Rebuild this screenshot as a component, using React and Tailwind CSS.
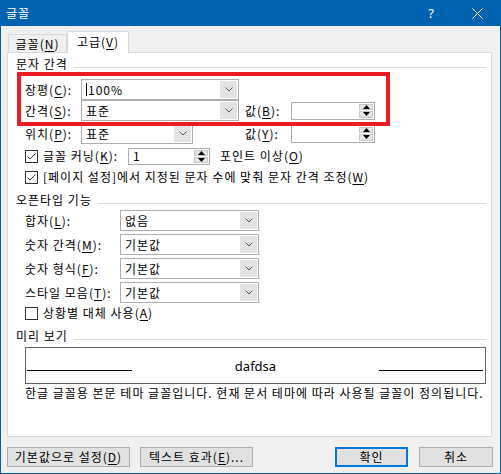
import React from 'react';

// mnemonic letter with underline
function K({ children }) {
  return <span className="underline decoration-1 underline-offset-[2px]">{children}</span>;
}

function Chevron() {
  return (
    <svg width="8" height="5" viewBox="0 0 8 5">
      <path d="M0.5 0.5 L4 4 L7.5 0.5" fill="none" stroke="#5a5a5a" strokeWidth="1" />
    </svg>
  );
}

function Combo({ width, children }) {
  return (
    <div className={`flex h-[21px] border border-[#adadad] bg-white ${width}`}>
      <div className="flex flex-1 items-center pl-[4px]">{children}</div>
      <div className="m-px flex w-[17px] items-center justify-center bg-[#e3e3e3]">
        <Chevron />
      </div>
    </div>
  );
}

function Arrow({ up }) {
  return (
    <svg width="7" height="4" viewBox="0 0 7 4">
      <path d={up ? 'M0 4 L3.5 0 L7 4 Z' : 'M0 0 L3.5 4 L7 0 Z'} fill="#000" />
    </svg>
  );
}

function Spin({ width, height, children }) {
  return (
    <div className={`flex border border-[#adadad] bg-white ${width} ${height}`}>
      <div className="flex flex-1 items-center pl-[4px]">{children}</div>
      <div className="flex w-[16px] flex-col gap-px p-px">
        <div className="flex flex-1 items-center justify-center border border-[#c8c8c8] bg-[#e6e6e6]">
          <Arrow up />
        </div>
        <div className="flex flex-1 items-center justify-center border border-[#c8c8c8] bg-[#e6e6e6]">
          <Arrow />
        </div>
      </div>
    </div>
  );
}

function Check({ checked }) {
  return (
    <div className="flex h-[13px] w-[13px] shrink-0 items-center justify-center border border-[#333] bg-white">
      {checked && (
        <svg width="11" height="11" viewBox="0 0 11 11">
          <path d="M1.5 5.5 L4 8 L9.5 2.5" fill="none" stroke="#333" strokeWidth="1" />
        </svg>
      )}
    </div>
  );
}

function Group({ title, className }) {
  return (
    <div className={`flex h-[16px] items-center ${className}`}>
      <span className="pr-[6px]">{title}</span>
      <div className="mt-[6px] h-px flex-1 bg-[#dcdcdc]" />
    </div>
  );
}

function Btn({ width, primary, children }) {
  return (
    <div
      className={`flex h-[20px] items-center justify-center bg-[#e1e1e1] ${width} ${
        primary ? 'border-2 border-[#0078d7]' : 'border border-[#adadad]'
      }`}
    >
      {children}
    </div>
  );
}

const openTypeRows = [
  { label: <>합자(<K>L</K>):</>, value: '없음' },
  { label: <>숫자 간격(<K>M</K>):</>, value: '기본값' },
  { label: <>숫자 형식(<K>F</K>):</>, value: '기본값' },
  { label: <>스타일 모음(<K>T</K>):</>, value: '기본값' },
];

export default function App() {
  return (
    <div className="relative flex h-[474px] w-[501px] flex-col border-x border-b border-[#0063b1] bg-[#f0f0f0] font-['Noto_Sans_CJK_KR',sans-serif] text-[12px] leading-[16px] tracking-[1px] text-black">
      {/* title bar */}
      <div className="flex h-[26px] shrink-0 items-center bg-[#0063b1] text-white">
        <span className="pl-[5px]">글꼴</span>
        <span className="ml-auto w-[46px] text-center font-['Noto_Sans',sans-serif] text-[13px] tracking-normal">?</span>
        <span className="flex w-[46px] items-center justify-center">
          <svg width="11" height="11" viewBox="0 0 11 11">
            <path d="M0.5 0.5 L10.5 10.5 M10.5 0.5 L0.5 10.5" stroke="#fff" strokeWidth="1" />
          </svg>
        </span>
      </div>

      {/* tabs */}
      <div className="flex h-[26px] shrink-0 items-end pl-[7px]">
        <div className="flex h-[18px] w-[59px] items-center justify-center border border-b-0 border-[#d9d9d9]">
          글꼴(<K>N</K>)
        </div>
        <div className="relative z-10 -mb-px flex h-[22px] w-[62px] items-center justify-center border border-b-0 border-[#d9d9d9] bg-white pb-[2px]">
          고급(<K>V</K>)
        </div>
      </div>

      {/* tab page */}
      <div className="ml-[6px] flex h-[385px] w-[485px] shrink-0 flex-col border border-[#d9d9d9] bg-white pl-[8px] pr-[5px]">
        <Group title="문자 간격" className="mt-[3px]" />

        <div className="flex flex-col pl-[9px]">
          <div className="mt-[7px] flex h-[21px] items-center">
            <span className="w-[56px]">장평(<K>C</K>):</span>
            <Combo width="w-[158px]">
              <span className="mr-px inline-block h-[13px] w-px bg-black" />
              100%
            </Combo>
          </div>
          <div className="flex h-[21px] items-center">
            <span className="w-[56px]">간격(<K>S</K>):</span>
            <Combo width="w-[158px]">표준</Combo>
            <span className="ml-[6px] w-[46px]">값(<K>B</K>):</span>
            <Spin width="w-[84px]" height="h-[18px]" />
          </div>
          <div className="mt-[2px] flex h-[21px] items-center">
            <span className="w-[56px]">위치(<K>P</K>):</span>
            <Combo width="w-[112px]">표준</Combo>
            <span className="ml-[52px] w-[46px]">값(<K>Y</K>):</span>
            <Spin width="w-[84px]" height="h-[18px]" />
          </div>
          <div className="mt-[3px] flex h-[18px] items-center">
            <Check checked />
            <span className="ml-[5px] w-[85px]">글꼴 커닝(<K>K</K>):</span>
            <Spin width="w-[82px]" height="h-[17px]">1</Spin>
            <span className="ml-[10px]">포인트 이상(<K>O</K>)</span>
          </div>
          <div className="mt-[3px] flex h-[18px] items-center">
            <Check checked />
            <span className="ml-[5px]">[페이지 설정]에서 지정된 문자 수에 맞춰 문자 간격 조정(<K>W</K>)</span>
          </div>
        </div>

        <Group title="오픈타입 기능" className="mt-[6px]" />

        <div className="mt-[2px] flex flex-col gap-[3px] pl-[9px]">
          {openTypeRows.map((row, i) => (
            <div key={i} className="flex h-[21px] items-center">
              <span className="w-[95px]">{row.label}</span>
              <Combo width="w-[139px]">{row.value}</Combo>
            </div>
          ))}
        </div>
        <div className="mt-[1px] flex h-[18px] items-center pl-[9px]">
          <Check />
          <span className="ml-[5px]">상황별 대체 사용(<K>A</K>)</span>
        </div>

        <Group title="미리 보기" className="mt-[6px]" />

        <div className="ml-[9px] mt-[3px] flex h-[37px] items-center border border-[#646464] pl-px pr-[2px]">
          <div className="mt-[9px] h-px w-[105px] bg-black" />
          <span className="flex-1 text-center font-['Noto_Sans',sans-serif] text-[13px] tracking-normal">dafdsa</span>
          <div className="mt-[9px] h-px w-[104px] bg-black" />
        </div>
        <div className="mt-px h-[16px] pl-[9px]">
          한글 글꼴용 본문 테마 글꼴입니다. 현재 문서 테마에 따라 사용될 글꼴이 정의됩니다.
        </div>
      </div>

      {/* buttons */}
      <div className="mt-[10px] flex pl-[6px] pr-[7px]">
        <Btn width="w-[123px]">기본값으로 설정(<K>D</K>)</Btn>
        <Btn width="ml-[10px] w-[113px]">텍스트 효과(<K>E</K>)...</Btn>
        <Btn width="ml-auto w-[73px]" primary>확인</Btn>
        <Btn width="ml-[11px] w-[74px]">취소</Btn>
      </div>

      {/* red highlight box */}
      <div className="pointer-events-none absolute left-[16px] top-[72px] h-[54px] w-[373px] border-4 border-[#ed1c24]" />
    </div>
  );
}
